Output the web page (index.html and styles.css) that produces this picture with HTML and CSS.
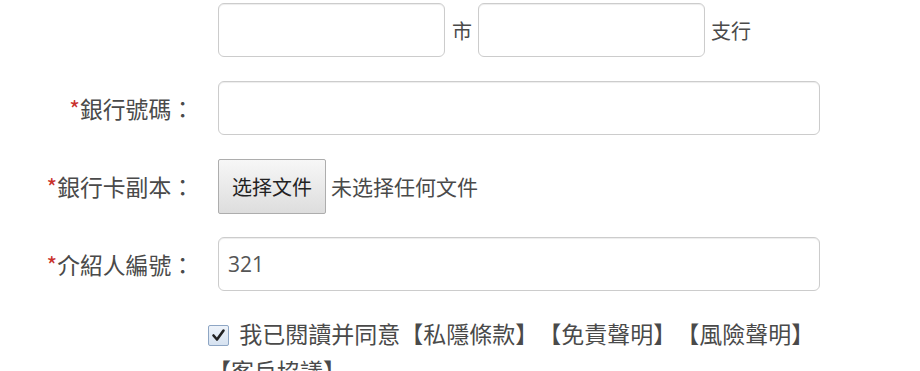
FILE: index.html
```html
<!DOCTYPE html>
<html lang="zh-Hant">
<head>
<meta charset="utf-8">
<link rel="stylesheet" href="styles.css">
</head>
<body>
<form class="form">
  <div class="row">
    <div class="label"></div>
    <div class="control inline">
      <input class="input half" type="text">
      <span class="unit">市</span>
      <input class="input half" type="text">
      <span class="unit unit-last">支行</span>
    </div>
  </div>
  <div class="row">
    <label class="label"><span class="req">*</span>銀行號碼：</label>
    <div class="control">
      <input class="input full" type="text">
    </div>
  </div>
  <div class="row">
    <label class="label"><span class="req">*</span>銀行卡副本：</label>
    <div class="control inline">
      <button class="file-btn" type="button">选择文件</button>
      <span class="file-name">未选择任何文件</span>
    </div>
  </div>
  <div class="row">
    <label class="label"><span class="req">*</span>介紹人編號：</label>
    <div class="control">
      <input class="input full" type="text" value="321">
    </div>
  </div>
  <div class="agree">
    <span class="check"><svg viewBox="0 0 21 21" width="21" height="21"><path d="M5.5 10.5 L9 14.5 L15.5 5.5" fill="none" stroke="#222" stroke-width="2.6" stroke-linecap="round" stroke-linejoin="round"/></svg></span>
    我已閱讀并同意【私隱條款】【免責聲明】【風險聲明】【客戶協議】
  </div>
</form>
</body>
</html>
```

FILE: styles.css
```css
html, body {
  margin: 0;
  padding: 0;
  background: #fff;
}

body {
  font-family: "Open Sans", "Noto Sans CJK TC", sans-serif;
  color: #555;
  font-size: 22px;
  overflow: hidden;
  text-spacing-trim: space-all;
}

.form {
  padding-top: 3px;
}

.row {
  display: flex;
  align-items: center;
  height: 54px;
  margin-bottom: 24px;
}

.label {
  width: 194px;
  margin-right: 24px;
  text-align: right;
  font-family: "Noto Sans CJK TC", sans-serif;
  font-size: 22.8px;
  color: #4a4a4a;
  white-space: nowrap;
}

.req {
  color: #c9302c;
}

.control {
  width: 602px;
  height: 54px;
}

.control.inline {
  display: flex;
  align-items: center;
}

.input {
  box-sizing: border-box;
  height: 54px;
  border: 1px solid #ccc;
  border-radius: 6px;
  box-shadow: inset 0 1px 1px rgba(0, 0, 0, 0.075);
  background: #fff;
  padding: 0 9px;
  font-family: "Open Sans", sans-serif;
  font-size: 21px;
  color: #555;
  outline: none;
}

.input.full {
  width: 602px;
}

.input.half {
  width: 227px;
}

.unit {
  font-family: "Noto Sans CJK TC", sans-serif;
  font-size: 20px;
  color: #4a4a4a;
  margin: 0 6px 0 7px;
}

.unit.unit-last {
  margin-left: 6px;
}

.file-btn {
  box-sizing: border-box;
  width: 108px;
  height: 55px;
  margin-top: 1px;
  border: 1px solid #adadad;
  border-radius: 2px;
  background: linear-gradient(#f7f7f7, #dddddd);
  font-family: "Noto Sans CJK SC", sans-serif;
  font-size: 20px;
  color: #222;
  padding: 0;
}

.file-name {
  margin-left: 5px;
  font-family: "Noto Sans CJK SC", sans-serif;
  font-size: 21px;
  color: #4a4a4a;
}

.agree {
  box-sizing: border-box;
  margin-left: 208px;
  width: 612px;
  font-family: "Noto Sans CJK TC", sans-serif;
  font-size: 23px;
  line-height: 37px;
  color: #4a4a4a;
}

.check {
  display: inline-block;
  box-sizing: border-box;
  width: 21px;
  height: 21px;
  margin-right: 5px;
  vertical-align: -3px;
  border: 1px solid #8ea6c4;
  border-radius: 2px;
  background: linear-gradient(#eef3fa, #d6e2f0);
}

.check svg {
  display: block;
  margin: -1px 0 0 -1px;
}
```
